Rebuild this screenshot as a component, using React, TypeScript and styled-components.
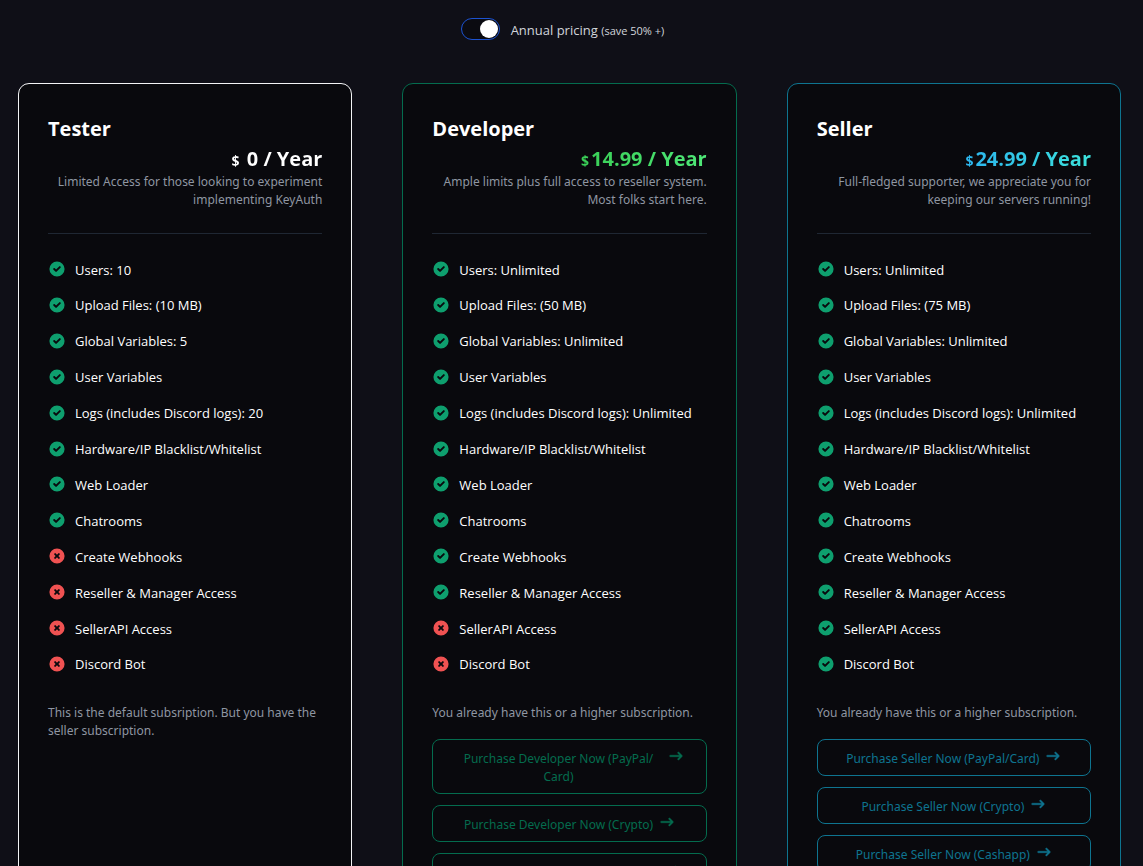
import React, { useState } from 'react';
import styled, { createGlobalStyle } from 'styled-components';

const GlobalStyle = createGlobalStyle`
  *, *::before, *::after { box-sizing: border-box; }
  html { background: #0f0f17; scrollbar-width: none; }
  body {
    margin: 0;
    background: #0f0f17;
    color: #ffffff;
    font-family: "Segoe UI", "Open Sans", "Noto Sans", sans-serif;
    font-size: 13px;
    line-height: 18px;
  }
  h2, p, ul { margin: 0; padding: 0; }
`;

const Page = styled.main`
  padding: 18px 22px 40px 18px;
`;

const BillingBar = styled.div`
  display: flex;
  justify-content: center;
  align-items: center;
  gap: 11px;
  padding-right: 14px;
  margin-bottom: 43px;
`;

const Toggle = styled.input`
  appearance: none;
  flex: none;
  display: flex;
  align-items: center;
  width: 39px;
  height: 22px;
  margin: 0;
  padding: 0 1px;
  border: 1px solid #1c52d0;
  border-radius: 11px;
  background: #0b0b11;
  cursor: pointer;

  &::before {
    content: "";
    width: 18px;
    height: 18px;
    border-radius: 50%;
    background: #ffffff;
  }
  &:checked { justify-content: flex-end; }
`;

const ToggleLabel = styled.label`
  padding-top: 2px;
  color: #d1d5db;
  small { font-size: 11px; }
`;

const Plans = styled.div`
  display: grid;
  grid-template-columns: repeat(3, minmax(0, 1fr));
  gap: 50px;
`;

const Card = styled.section<{ $border: string }>`
  display: flex;
  flex-direction: column;
  padding: 30px 29px;
  border: 1px solid ${(p) => p.$border};
  border-radius: 11px;
  background: #09090d;
`;

const PlanName = styled.h2`
  margin-bottom: 2px;
  font-size: 20px;
  line-height: 30px;
  font-weight: 700;
`;

const Price = styled.p<{ $from: string; $to: string }>`
  align-self: flex-end;
  font-size: 20px;
  line-height: 25px;
  font-weight: 700;
  color: transparent;
  background: linear-gradient(90deg, ${(p) => p.$from}, ${(p) => p.$to});
  background-clip: text;
  -webkit-background-clip: text;
  small {
    font-size: 14px;
    font-weight: 700;
    margin-right: 2px;
  }
`;

const MutedText = styled.p`
  font-family: "Segoe UI", "Noto Sans", "Open Sans", sans-serif;
  font-size: 12px;
  color: #8f96a2;
`;

const Summary = styled(MutedText)`
  min-height: 36px;
  text-align: right;
`;

const Divider = styled.hr`
  width: 100%;
  height: 1px;
  margin: 24px 0 26px;
  border: 0;
  background: #1f2733;
`;

const Features = styled.ul`
  display: flex;
  flex-direction: column;
  justify-content: space-between;
  min-height: 414px;
  list-style: none;
`;

const Feature = styled.li`
  display: flex;
  align-items: center;
  gap: 9px;
`;

const StatusIcon = styled.svg<{ $ok: boolean }>`
  flex: none;
  width: 18px;
  height: 18px;
  margin-bottom: 1px;
  fill: ${(p) => (p.$ok ? '#0e9f6e' : '#f05252')};
`;

const Note = styled(MutedText)`
  margin-top: 30px;
`;

const Actions = styled.div`
  display: flex;
  flex-direction: column;
  gap: 11px;
  margin-top: 17px;
`;

const BuyButton = styled.button<{ $color: string }>`
  display: flex;
  justify-content: center;
  align-items: flex-start;
  gap: 6px;
  padding: 8px 22px 7px;
  border: 1px solid ${(p) => p.$color};
  border-radius: 8px;
  background: transparent;
  color: ${(p) => p.$color};
  font-family: "Segoe UI", "Noto Sans", "Open Sans", sans-serif;
  font-size: 12px;
  line-height: 18px;
  cursor: pointer;
`;

const ButtonText = styled.span`
  padding-top: 2px;
`;

const Arrow = styled.svg`
  flex: none;
  width: 16px;
  height: 16px;
  fill: currentColor;
  stroke: currentColor;
  stroke-width: 0.5;
`;

const checkPath =
  'M10 18a8 8 0 100-16 8 8 0 000 16zm3.707-9.293a1 1 0 00-1.414-1.414L9 10.586 7.707 9.293a1 1 0 00-1.414 1.414l2 2a1 1 0 001.414 0l4-4z';
const crossPath =
  'M10 18a8 8 0 100-16 8 8 0 000 16zM8.707 7.293a1 1 0 00-1.414 1.414L8.586 10l-1.293 1.293a1 1 0 101.414 1.414L10 11.414l1.293 1.293a1 1 0 001.414-1.414L11.414 10l1.293-1.293a1 1 0 00-1.414-1.414L10 8.586 8.707 7.293z';
const arrowPath =
  'M12.293 5.293a1 1 0 011.414 0l4 4a1 1 0 010 1.414l-4 4a1 1 0 01-1.414-1.414L14.586 11H3a1 1 0 110-2h11.586l-2.293-2.293a1 1 0 010-1.414z';

interface Plan {
  name: string;
  price: string;
  from: string;
  to: string;
  border: string;
  accent: string;
  summary: string;
  users: string;
  upload: string;
  globals: string;
  logs: string;
  included: number;
  note: string;
  methods: string[];
}

const plans: Plan[] = [
  {
    name: 'Tester', price: '\u00a00 / Year', from: '#ffffff', to: '#ffffff', border: '#f3f4f6', accent: '#ffffff',
    summary: 'Limited Access for those looking to experiment implementing KeyAuth',
    users: '10', upload: '10 MB', globals: '5', logs: '20', included: 8,
    note: 'This is the default subsription. But you have the seller subscription.',
    methods: [],
  },
  {
    name: 'Developer', price: '14.99 / Year', from: '#39cf56', to: '#4fe878', border: '#046c4e', accent: '#046c4e',
    summary: 'Ample limits plus full access to reseller system. Most folks start here.',
    users: 'Unlimited', upload: '50 MB', globals: 'Unlimited', logs: 'Unlimited', included: 10,
    note: 'You already have this or a higher subscription.',
    methods: ['PayPal/Card', 'Crypto', 'Cashapp'],
  },
  {
    name: 'Seller', price: '24.99 / Year', from: '#2cb5ee', to: '#3ce2dc', border: '#0e7490', accent: '#0e7490',
    summary: 'Full-fledged supporter, we appreciate you for keeping our servers running!',
    users: 'Unlimited', upload: '75 MB', globals: 'Unlimited', logs: 'Unlimited', included: 12,
    note: 'You already have this or a higher subscription.',
    methods: ['PayPal/Card', 'Crypto', 'Cashapp'],
  },
];

const featureList = (p: Plan) => [
  `Users: ${p.users}`,
  `Upload Files: (${p.upload})`,
  `Global Variables: ${p.globals}`,
  'User Variables',
  `Logs (includes Discord logs): ${p.logs}`,
  'Hardware/IP Blacklist/Whitelist',
  'Web Loader',
  'Chatrooms',
  'Create Webhooks',
  'Reseller & Manager Access',
  'SellerAPI Access',
  'Discord Bot',
];

function PlanCard({ plan }: { plan: Plan }) {
  return (
    <Card $border={plan.border}>
      <PlanName>{plan.name}</PlanName>
      <Price $from={plan.from} $to={plan.to}>
        <small>$</small>
        {plan.price}
      </Price>
      <Summary>{plan.summary}</Summary>
      <Divider />
      <Features>
        {featureList(plan).map((text, i) => (
          <Feature key={text}>
            <StatusIcon $ok={i < plan.included} viewBox="0.5 0.5 19 19" aria-hidden="true">
              <path fillRule="evenodd" clipRule="evenodd" d={i < plan.included ? checkPath : crossPath} />
            </StatusIcon>
            <span>{text}</span>
          </Feature>
        ))}
      </Features>
      <Note>{plan.note}</Note>
      {plan.methods.length > 0 && (
        <Actions>
          {plan.methods.map((method) => (
            <BuyButton key={method} type="button" $color={plan.accent}>
              <ButtonText>{`Purchase ${plan.name} Now (${method.replace('/', '/\u200b')})`}</ButtonText>
              <Arrow viewBox="0 0 20 20" aria-hidden="true">
                <path fillRule="evenodd" clipRule="evenodd" d={arrowPath} />
              </Arrow>
            </BuyButton>
          ))}
        </Actions>
      )}
    </Card>
  );
}

export default function App() {
  const [annual, setAnnual] = useState(true);
  return (
    <>
      <GlobalStyle />
      <Page>
        <BillingBar>
          <Toggle id="annual" type="checkbox" checked={annual} onChange={(e) => setAnnual(e.target.checked)} />
          <ToggleLabel htmlFor="annual">
            Annual pricing <small>(save 50% +)</small>
          </ToggleLabel>
        </BillingBar>
        <Plans>
          {plans.map((plan) => (
            <PlanCard key={plan.name} plan={plan} />
          ))}
        </Plans>
      </Page>
    </>
  );
}
